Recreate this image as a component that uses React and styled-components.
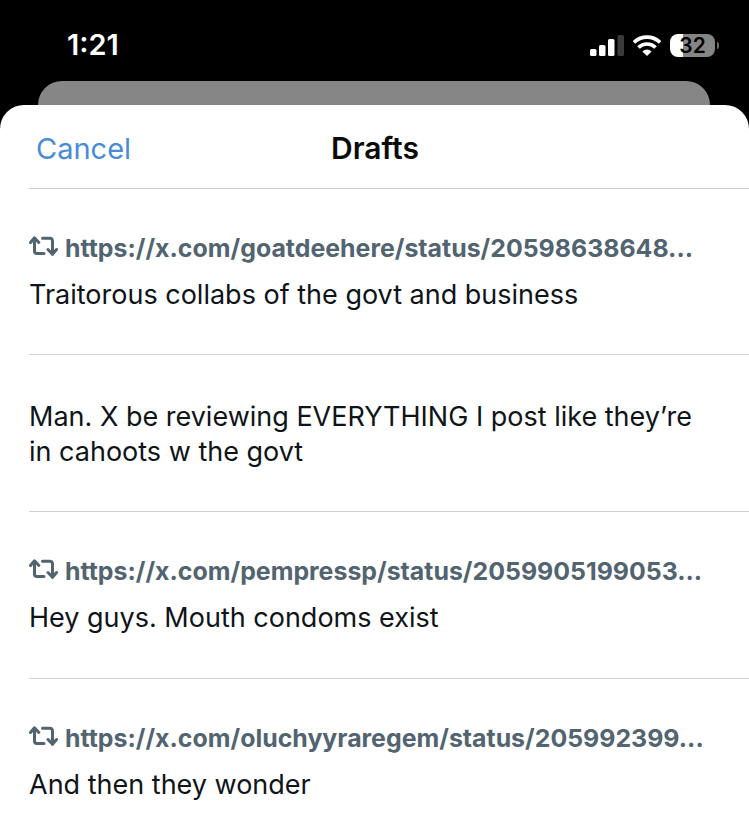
import React from 'react';
import styled, { createGlobalStyle } from 'styled-components';

const GlobalStyle = createGlobalStyle`
  html, body {
    margin: 0;
    padding: 0;
    background: #000;
    height: 100%;
    overflow: hidden;
  }
  #root {
    height: 100%;
  }
`;

const Screen = styled.div`
  width: 749px;
  height: 839px;
  overflow: hidden;
  background: #000;
  font-family: Inter, "Liberation Sans", sans-serif;
`;

const StatusBar = styled.div`
  height: 81px;
  box-sizing: border-box;
  padding: 28px 34px 0 67px;
  display: flex;
  justify-content: space-between;
  align-items: flex-start;
`;

const Clock = styled.div`
  color: #fff;
  font-size: 29px;
  line-height: 34px;
  font-weight: 600;
`;

const Indicators = styled.div`
  display: flex;
  align-items: center;
  gap: 9px;
  height: 34px;
`;

const Battery = styled.div`
  width: 45px;
  height: 23px;
  border-radius: 8px;
  background: linear-gradient(to right, #fff 0 29%, #858585 29% 100%);
  color: #000;
  font-size: 21px;
  font-weight: 600;
  line-height: 23px;
  text-align: center;
  position: relative;

  &::after {
    content: '';
    position: absolute;
    right: -4px;
    top: 8px;
    width: 2px;
    height: 7px;
    border-radius: 0 3px 3px 0;
    background: #6a6a6a;
  }
`;

const PeekCard = styled.div`
  height: 24px;
  margin: 0 39px 0 38px;
  background: #868686;
  border-radius: 24px 24px 0 0;
`;

const Sheet = styled.div`
  background: #fff;
  border-radius: 24px 24px 0 0;
  height: 734px;
`;

const SheetHeader = styled.div`
  height: 84px;
  box-sizing: border-box;
  margin-left: 29px;
  border-bottom: 1px solid #cfd2d5;
  position: relative;
  display: flex;
  align-items: center;
  justify-content: center;
`;

const CancelLink = styled.div`
  position: absolute;
  left: 7px;
  top: 26px;
  font-size: 29px;
  line-height: 36px;
  color: #4a8bd6;
`;

const Title = styled.div`
  font-size: 30px;
  line-height: 36px;
  font-weight: 600;
  color: #0b0b0b;
  margin: 3px 28px 0 0;
`;

const DraftList = styled.div`
  margin-left: 29px;
`;

const DraftRow = styled.div`
  height: ${(p) => p.$height}px;
  box-sizing: border-box;
  padding: ${(p) => p.$top}px 40px 0 0;
  border-bottom: 1px solid #cfd2d5;

  &:last-child {
    border-bottom: none;
  }
`;

const QuoteLine = styled.div`
  display: flex;
  align-items: center;
  gap: 7px;
  height: 30px;
  margin-bottom: 14px;
`;

const QuoteUrl = styled.span`
  font-size: 24.9px;
  line-height: 30px;
  font-weight: 700;
  color: #536471;
  white-space: nowrap;
`;

const DraftText = styled.div`
  font-size: 27px;
  line-height: 35px;
  color: #0f1419;
`;

const RepostSvg = styled.svg`
  flex: none;
  margin-top: -4px;
`;

const SignalIcon = () => (
  <svg width="34" height="21" viewBox="0 0 34 21">
    <rect x="0" y="14" width="6.5" height="7" rx="1.5" fill="#fff" />
    <rect x="9" y="10" width="6.5" height="11" rx="1.5" fill="#fff" />
    <rect x="18" y="4" width="6.5" height="17" rx="1.5" fill="#fff" />
    <rect x="27.5" y="0" width="6.5" height="21" rx="1.5" fill="#3a3a3a" />
  </svg>
);

const WifiIcon = () => (
  <svg width="28" height="21" viewBox="0 0 28 21" fill="none">
    <path d="M0.9 7.4 A19 19 0 0 1 27.1 7.4" stroke="#fff" strokeWidth="3.6" />
    <path d="M5.5 12.5 A12 12 0 0 1 22.5 12.5" stroke="#fff" strokeWidth="3.6" />
    <path d="M14 21 L9.4 16.4 A6.5 6.5 0 0 1 18.6 16.4 Z" fill="#fff" />
  </svg>
);

const RepostIcon = () => (
  <RepostSvg width="29" height="20" viewBox="0 0 29 20" fill="none" stroke="#536471" strokeWidth="3" strokeLinecap="round" strokeLinejoin="round">
    <path d="M1.5 6.5 L5.5 1.8 L9.8 6.5" />
    <path d="M5.5 2.5 V15 Q5.5 17.5 8 17.5 H15" />
    <path d="M13.5 2.2 H20.5 Q23.5 2.2 23.5 5 V18" />
    <path d="M19 13.5 L23.5 18.2 L27.5 13.5" />
  </RepostSvg>
);

const drafts = [
  { height: 166, top: 44, url: 'https://x.com/goatdeehere/status/20598638648...', text: 'Traitorous collabs of the govt and business' },
  { height: 157, top: 44, text: 'Man. X be reviewing EVERYTHING I post like they’re in cahoots w the govt' },
  { height: 167, top: 44, url: 'https://x.com/pempressp/status/2059905199053...', text: 'Hey guys. Mouth condoms exist' },
  { height: 161, top: 44, url: 'https://x.com/oluchyyraregem/status/205992399...', text: 'And then they wonder' },
];

const App = () => (
  <Screen>
    <GlobalStyle />
    <StatusBar>
      <Clock>1:21</Clock>
      <Indicators>
        <SignalIcon />
        <WifiIcon />
        <Battery>32</Battery>
      </Indicators>
    </StatusBar>
    <PeekCard />
    <Sheet>
      <SheetHeader>
        <CancelLink>Cancel</CancelLink>
        <Title>Drafts</Title>
      </SheetHeader>
      <DraftList>
        {drafts.map((d) => (
          <DraftRow key={d.text} $height={d.height} $top={d.top}>
            {d.url && (
              <QuoteLine>
                <RepostIcon />
                <QuoteUrl>{d.url}</QuoteUrl>
              </QuoteLine>
            )}
            <DraftText>{d.text}</DraftText>
          </DraftRow>
        ))}
      </DraftList>
    </Sheet>
  </Screen>
);

export default App;
